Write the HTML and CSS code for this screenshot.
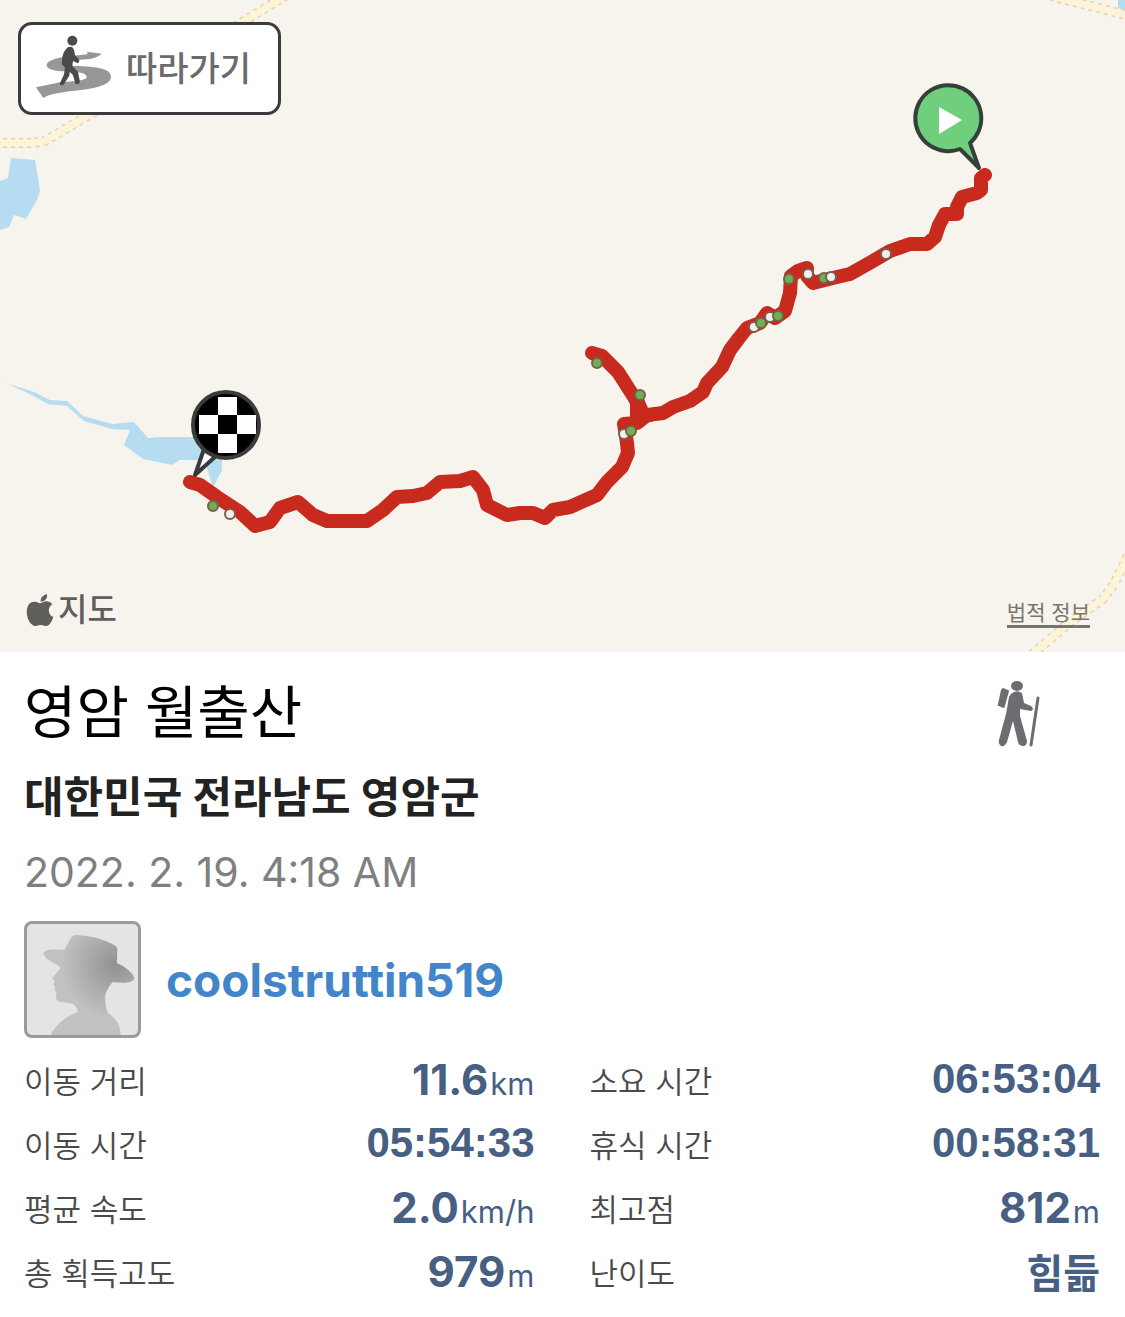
FILE: index.html
```html
<!DOCTYPE html>
<html lang="ko">
<head>
<meta charset="utf-8">
<meta name="viewport" content="width=device-width, initial-scale=1">
<title>영암 월출산</title>
<link rel="stylesheet" href="styles.css">
</head>
<body>
<section class="map">
  <svg class="map-canvas" viewBox="0 0 1125 652" aria-hidden="true">
    <rect width="1125" height="652" fill="#f7f4ed"/>
    <g class="road-edge">
      <path d="M-5 143H33L45 141L130 91L290 -7"/>
      <path d="M1026 660L1070 622L1103 599L1114 584L1130 552"/>
      <path d="M1035 -8L1130 16"/>
    </g>
    <g class="road">
      <path d="M-5 143H33L45 141L130 91L290 -7"/>
      <path d="M1026 660L1070 622L1103 599L1114 584L1130 552"/>
      <path d="M1035 -8L1130 16"/>
    </g>
    <g fill="#b5dcf0">
      <path d="M11 158L35 160L40 190L38 198L26 219L14 215L9 227L0 230V181L8 178Z"/>
      <path d="M1118 0H1125V10L1118 8Z"/>
      <path d="M6 383L34 392L50 400L67 401L83 416L112 424L134 422L148 438L160 437H222V470L213 488L207 468V460H180L172 465L143 459L124 445L130 430L112 429L84 421L67 406L48 404L30 394Z"/>
    </g>
    <g class="route">
      <path d="M985 175L981 178V190L977 193L962 197L957 207V214L945 214L939 225L935 237L927 244L910 244L890 251L873 261L850 274L837 277L813 283L807 276V268L798 271L791 276L790 293L785 311L775 318L767 313L760 323L747 328L739 338L730 350L722 367L707 383L703 392L690 401L673 407L663 413L647 415L637 423L624 424L627 443L628 453L622 467L607 482L597 495L570 507L553 510L545 518L533 513H520L507 515L487 505L483 490L473 477L460 481L440 482L427 493L413 496L397 497L383 510L367 521H327L313 515L298 502L280 508L270 522L255 526L240 512L217 497L200 485L190 482"/>
      <path d="M592 353L602 356L618 372L634 397L642 412L637 400V418L650 415"/>
    </g>
    <g class="dot dot-white">
      <circle cx="886" cy="254" r="5"/><circle cx="808" cy="274" r="5"/>
      <circle cx="770" cy="317" r="5"/><circle cx="754" cy="327" r="5"/>
      <circle cx="624" cy="434" r="5"/><circle cx="230" cy="514" r="5"/>
    </g>
    <g class="dot dot-green">
      <circle cx="824" cy="278" r="5"/><circle cx="789" cy="279" r="5"/>
      <circle cx="778" cy="316" r="5"/><circle cx="761" cy="323" r="5"/>
      <circle cx="597" cy="363" r="5"/><circle cx="640" cy="395" r="5"/>
      <circle cx="631" cy="431" r="5"/><circle cx="213" cy="506" r="5"/>
    </g>
    <g class="dot dot-white"><circle cx="831" cy="277" r="5"/></g>
    <g class="pin-start">
      <path d="M960 149A33 33 0 1 1 970 143L979 168Z" fill="#70cf7d" stroke="#344139" stroke-width="4" stroke-linejoin="round"/>
      <path d="M939 107V134L962 120Z" fill="#fff"/>
    </g>
    <g class="pin-finish">
      <path d="M204 449L195 475L216 456" fill="#fff" stroke="#363a3d" stroke-width="4" stroke-linejoin="round"/>
      <circle cx="226" cy="425" r="33" fill="#000" stroke="#3b3b3b" stroke-width="4"/>
      <path d="M218 397H237V415H218ZM199 415H218V434H199ZM237 415H256V434H237ZM218 434H237V453H218Z" fill="#fff"/>
    </g>
  </svg>
  <button class="follow" type="button">
    <svg class="follow-icon" viewBox="108 108 228 192" aria-hidden="true">
      <path fill="#979797" d="M305 164L262 158V166L215 171C165 175 138 187 140 200C142 211 165 216 195 217C235 218 260 222 260 234C260 244 225 247 180 250L108 265L130 297C150 284 180 280 225 275C295 269 333 254 333 234C333 211 300 202 220 201C200 199 190 194 195 188C210 183 250 182 270 180L285 176L300 169Z"/>
      <circle cx="217" cy="125" r="15" fill="#4a4a4a"/>
      <path fill="#4a4a4a" d="M201 147C209 140 220 143 222 153L225 168L238 184Q238 194 230 191L219 186L217 201L234 219L240 249Q238 257 229 255Q224 254 224 246L219 229L209 218L208 230L192 256Q184 262 179 255L192 226L195 206L186 196C185 174 190 158 201 147Z"/>
    </svg>
    <span>따라가기</span>
  </button>
  <div class="map-brand">
    <svg class="brand-icon" viewBox="80 673 84 97" aria-hidden="true">
      <path fill="#5f5e5b" d="M143 673C145 685 136 695 124 695C123 684 132 675 143 673ZM122 700C130 698 135 693 144 694Q154 695 159 703C143 713 146 735 162 741C157 756 149 769 140 768C132 767 127 763 118 766C110 769 104 770 97 763C84 751 77 724 87 706C96 691 111 695 122 700Z"/>
    </svg>
    <span>지도</span>
  </div>
  <a class="legal" href="#legal">법적 정보</a>
</section>

<main class="details">
  <header class="heading">
    <h1 class="title">영암 월출산</h1>
    <svg class="hiker" viewBox="0 0 44 67" role="img" aria-label="등산">
      <g fill="#6b6d70">
        <ellipse cx="20" cy="6" rx="6" ry="5"/>
        <path d="M6 8L11 10Q12 10 12 11L8 26Q8 28 6 28L2 26Q0 26 1 24L4 10Q5 8 6 8Z"/>
        <path d="M14 14Q19 9 25 13L27 23L34 26Q38 29 34 31L23 29V36L30 61Q30 66 26 66Q22 66 21 62L16 41L10 62Q8 67 4 66Q1 64 2 60L9 34L12 17Z"/>
      </g>
      <path d="M41 18L34 65" fill="none" stroke="#6b6d70" stroke-width="3" stroke-linecap="round"/>
    </svg>
  </header>
  <p class="region">대한민국 전라남도 영암군</p>
  <time class="date" datetime="2022-02-19T04:18">2022. 2. 19. 4:18 AM</time>
  <div class="author">
    <svg class="avatar" viewBox="51 42 333 333" aria-hidden="true">
      <defs>
        <radialGradient id="shade" gradientUnits="userSpaceOnUse" cx="315" cy="165" r="160">
          <stop offset="0" stop-color="#929292"/>
          <stop offset="1" stop-color="#c1c1c1"/>
        </radialGradient>
      </defs>
      <path fill="url(#shade)" d="M100 129C105 117 135 117 163 120L183 83Q188 74 201 75C240 77 285 89 316 107Q323 111 322 120L321 160C345 169 370 189 373 205C367 223 335 218 307 217Q291 237 286 254Q284 290 294 309C319 325 331 346 332 375H122C139 341 170 318 204 306Q200 282 176 278L151 276Q138 273 138 261L139 247L133 240L136 231L130 225L134 213L126 206L151 175L146 167C121 156 103 144 100 129Z"/>
    </svg>
    <a class="username" href="#coolstruttin519">coolstruttin519</a>
  </div>
  <dl class="stats">
    <div class="stat"><dt>이동 거리</dt><dd>11.6<small>km</small></dd></div>
    <div class="stat"><dt>소요 시간</dt><dd class="clock">06:53:04</dd></div>
    <div class="stat"><dt>이동 시간</dt><dd class="clock">05:54:33</dd></div>
    <div class="stat"><dt>휴식 시간</dt><dd class="clock">00:58:31</dd></div>
    <div class="stat"><dt>평균 속도</dt><dd>2.0<small>km/h</small></dd></div>
    <div class="stat"><dt>최고점</dt><dd>812<small>m</small></dd></div>
    <div class="stat"><dt>총 획득고도</dt><dd>979<small>m</small></dd></div>
    <div class="stat"><dt>난이도</dt><dd class="grade">힘듦</dd></div>
  </dl>
</main>
</body>
</html>
```
FILE: styles.css
```css
* {
  box-sizing: border-box;
}

body {
  margin: 0;
  background: #fff;
  color: #000;
  font-family: Inter, "Noto Sans CJK KR", sans-serif;
}

h1, p, dl, dd {
  margin: 0;
}

.map {
  position: relative;
}

.map-canvas {
  display: block;
  width: 100%;
}

.road-edge, .road, .route {
  fill: none;
  stroke-linejoin: round;
}

.road-edge {
  stroke: #e6d3b4;
  stroke-width: 10;
  stroke-dasharray: 4 4;
}

.road {
  stroke: #fdf3d6;
  stroke-width: 7;
}

.route {
  stroke: #c92a1e;
  stroke-width: 14;
  stroke-linecap: round;
}

.dot {
  stroke: #76604f;
  stroke-width: 2;
}

.dot-white {
  fill: #f4efec;
}

.dot-green {
  fill: #6fb050;
}

.follow {
  position: absolute;
  top: 22px;
  left: 18px;
  display: flex;
  align-items: center;
  gap: 14px;
  height: 93px;
  padding: 0 27px 3px 15px;
  border: 3px solid #3b3b3b;
  border-radius: 14px;
  background: #fff;
  color: #6b6b6b;
  font-family: "Noto Sans CJK KR", sans-serif;
  font-size: 34px;
  font-weight: 500;
  line-height: 48px;
}

.follow-icon {
  width: 76px;
  height: 64px;
}

.map-brand {
  position: absolute;
  bottom: 20px;
  left: 26px;
  display: flex;
  align-items: center;
  gap: 4px;
  color: #5f5e5b;
  font-size: 32px;
  font-weight: 500;
  line-height: 44px;
}

.brand-icon {
  width: 28px;
  height: 33px;
}

.legal {
  position: absolute;
  right: 35px;
  bottom: 24px;
  border-bottom: 3px solid #77756f;
  color: #77756f;
  font-size: 21px;
  line-height: 24px;
  text-decoration: none;
}

.details {
  padding: 23px 25px 16px 24px;
}

.heading {
  display: flex;
  align-items: center;
  justify-content: space-between;
  padding-right: 59px;
}

.title {
  font-size: 57px;
  font-weight: 400;
  line-height: 76px;
}

.hiker {
  width: 44px;
  height: 67px;
}

.region {
  margin-top: 12px;
  color: #222;
  font-size: 43px;
  font-weight: 700;
  line-height: 68px;
}

.date {
  display: block;
  margin-top: 13px;
  color: #7f7f7f;
  font-size: 41px;
  line-height: 56px;
}

.author {
  display: flex;
  align-items: center;
  gap: 25px;
  margin-top: 21px;
}

.avatar {
  width: 117px;
  height: 117px;
  border: 3px solid #9b9b9b;
  border-radius: 8px;
  background: #e4e4e4;
}

.username {
  color: #4285c9;
  font-size: 46px;
  font-weight: 700;
  line-height: 56px;
  text-decoration: none;
}

.stats {
  display: grid;
  grid-template-columns: 1fr 1fr;
  column-gap: 55px;
  margin-top: 9px;
}

.stat {
  display: flex;
  align-items: center;
  justify-content: space-between;
  height: 64px;
}

dt {
  color: #4a4a4a;
  font-family: "Noto Sans CJK KR", sans-serif;
  font-size: 31px;
  font-weight: 350;
}

dd {
  color: #465f82;
  font-size: 42px;
  font-weight: 700;
}

small {
  margin-left: 2px;
  font-size: 31px;
  font-weight: 400;
}

.clock {
  font-family: "Liberation Sans", Arial, sans-serif;
}

.grade {
  font-size: 40px;
}
```
